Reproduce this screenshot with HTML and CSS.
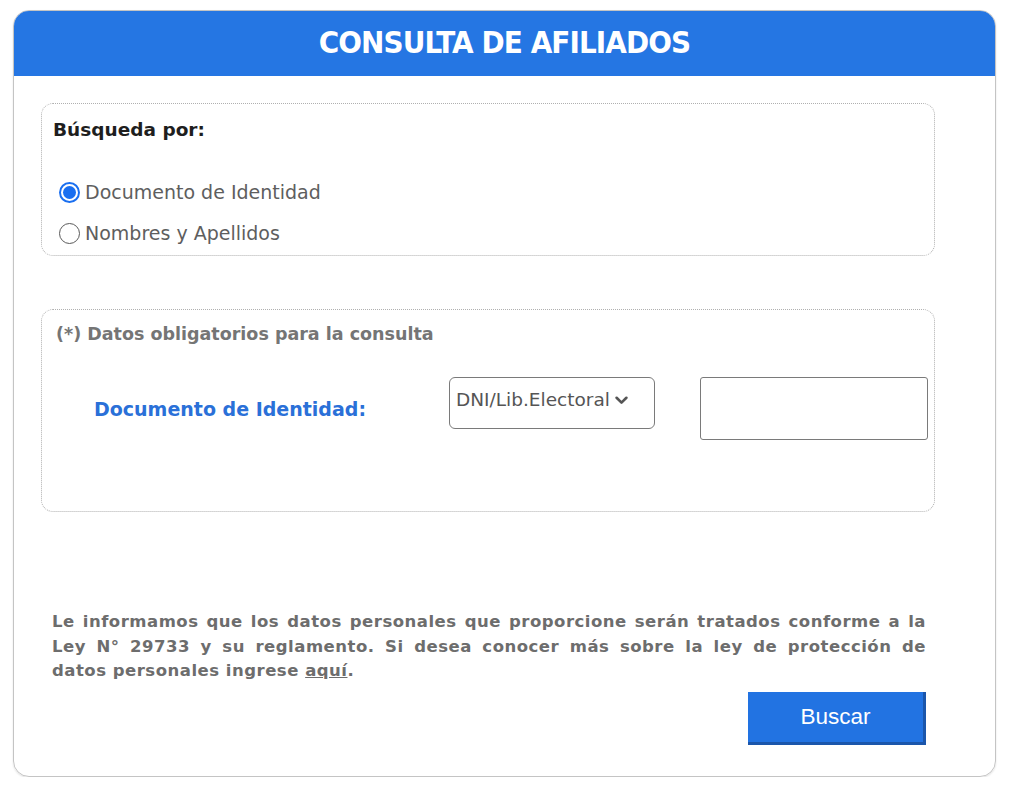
FILE: index.html
```html
<!DOCTYPE html>
<html lang="es">
<head>
<meta charset="utf-8">
<title>Consulta de Afiliados</title>
<link rel="stylesheet" href="styles.css">
</head>
<body>
<div class="card">
  <div class="card-header">CONSULTA DE AFILIADOS</div>
  <div class="card-body">
    <div class="box box-search">
      <div class="box-title">Búsqueda por:</div>
      <div class="radios">
        <label class="radio"><span class="dot checked"></span>Documento de Identidad</label>
        <label class="radio"><span class="dot"></span>Nombres y Apellidos</label>
      </div>
    </div>
    <div class="box box-data">
      <div class="note">(*) Datos obligatorios para la consulta</div>
      <div class="form-row">
        <div class="field-label">Documento de Identidad:</div>
        <div class="select">DNI/Lib.Electoral
          <svg class="chev" viewBox="0 0 12 8" width="13" height="9"><path d="M1.5 1.5 L6 6 L10.5 1.5" fill="none" stroke="#555" stroke-width="2.4" stroke-linecap="round" stroke-linejoin="round"/></svg>
        </div>
        <div class="input"></div>
      </div>
    </div>
    <p class="legal">Le informamos que los datos personales que proporcione serán tratados conforme a la Ley N° 29733 y su reglamento. Si desea conocer más sobre la ley de protección de datos&nbsp;personales ingrese <a href="#">aquí</a>.</p>
    <div class="actions"><button class="btn">Buscar</button></div>
  </div>
</div>
</body>
</html>
```
FILE: styles.css
```css
html, body { margin: 0; padding: 0; background: #fff; }
body { font-family: "DejaVu Sans", sans-serif; }
.card {
  margin: 10px 0 0 13px;
  width: 983px;
  height: 767px;
  border: 1px solid #c4c4c4;
  border-radius: 16px;
  box-shadow: 0 1px 2px rgba(0,0,0,0.12);
  overflow: hidden;
  box-sizing: border-box;
}
.card-header {
  background: #2576e3;
  color: #fff;
  font-family: "DejaVu Sans Condensed", "DejaVu Sans", sans-serif;
  font-weight: bold;
  font-size: 31px;
  letter-spacing: -0.9px;
  height: 65px;
  display: flex;
  align-items: center;
  justify-content: center;
  padding-bottom: 3px;
  box-sizing: border-box;
}
.card-body { padding: 27px 60px 0 27px; }
.box {
  border: 1px dotted #b0b0b0;
  border-radius: 12px;
  width: 894px;
  box-sizing: border-box;
}
.box-search { height: 153px; padding: 15px 10px 0 11px; }
.box-title { font-weight: bold; font-size: 18.5px; color: #1e1e1e; }
.radios { margin-top: 41px; display: flex; flex-direction: column; gap: 19px; }
.radio { display: flex; align-items: center; font-size: 19px; color: #5e5e5e; }
.dot {
  width: 21px; height: 21px; border-radius: 50%;
  border: 1.5px solid #5a5a5a;
  box-sizing: border-box;
  margin: 0 5px 0 6px;
  position: relative;
}
.dot.checked { border: 2px solid #1a6ff0; }
.dot.checked::after {
  content: ""; position: absolute; left: 2px; top: 2px;
  width: 13px; height: 13px; border-radius: 50%; background: #1a6ff0;
}
.box-data { margin-top: 53px; height: 203px; padding: 14px 0 0 14px; }
.note { font-weight: bold; font-size: 17.5px; color: #757575; }
.form-row { display: flex; align-items: flex-start; margin-top: 33px; }
.form-row > * { flex-shrink: 0; }
.field-label {
  font-weight: bold; font-size: 19px; color: #2a70d8;
  width: 393px; padding-left: 38px; box-sizing: border-box; margin-top: 21px;
}
.select {
  width: 206px; height: 52px; border: 1.5px solid #7a7a7a; border-radius: 6px;
  box-sizing: border-box; font-size: 18.5px; color: #555;
  padding: 11px 0 0 6px; display: flex; align-items: flex-start; gap: 5px;
}
.chev { margin-top: 7px; }
.input {
  margin-left: 45px; width: 228px; height: 63px; border: 1.5px solid #7a7a7a; border-radius: 3px;
  box-sizing: border-box;
}
.legal {
  margin: 98px 0 0 11px; width: 874px;
  font-weight: bold; font-size: 16.5px; color: #6d6d6d;
  line-height: 24.5px; text-align: justify; letter-spacing: 0.5px;
}
.legal a { color: #6d6d6d; text-decoration: underline; }
.actions { display: flex; justify-content: flex-end; width: 885px; margin-top: 8px; }
.btn {
  width: 178px; height: 53px;
  background: #2273e2; color: #fff;
  border: none; border-right: 3px solid #1b56ab; border-bottom: 3px solid #1b56ab;
  font-family: "Liberation Sans", Arial, sans-serif; font-size: 22.5px;
  padding: 0; cursor: pointer;
}
```
